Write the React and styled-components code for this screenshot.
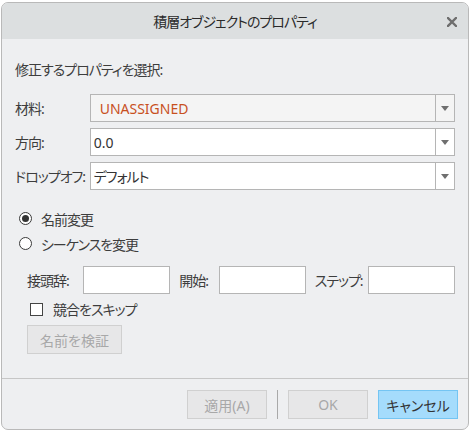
import React from 'react'
import styled, { createGlobalStyle } from 'styled-components'

const GlobalStyle = createGlobalStyle`
  body {
    margin: 0;
    background: #ffffff;
    font-family: "Noto Sans", "Noto Sans CJK JP", sans-serif;
    font-feature-settings: "palt";
  }
`

const Dialog = styled.div`
  margin: 2px 0 0 1px;
  width: 468px;
  height: 428px;
  box-sizing: border-box;
  border: 1px solid #b9b9b9;
  border-radius: 7px;
  overflow: hidden;
  background: #eeeff1;
  display: flex;
  flex-direction: column;
  color: #3d3d3d;
  font-size: 14px;
  letter-spacing: -1px;
`

const TitleBar = styled.div`
  height: 36px;
  flex-shrink: 0;
  background: #dcdfe0;
  display: flex;
  align-items: center;
  justify-content: center;
  position: relative;
`

const Title = styled.div`
  font-size: 14px;
  color: #2a2a2a;
`

const CloseButton = styled.div`
  position: absolute;
  right: 11px;
  top: 14px;
  width: 10px;
  height: 10px;
  display: flex;
`

const Body = styled.div`
  flex: 1;
  padding: 22px 13px 0;
  display: flex;
  flex-direction: column;
`

const Heading = styled.div`
  line-height: 18px;
`

const FieldList = styled.div`
  margin-top: 15px;
  display: flex;
  flex-direction: column;
  gap: 6px;
`

const FieldRow = styled.div`
  display: flex;
  align-items: center;
  height: 28px;
`

const FieldLabel = styled.div`
  width: 75px;
  white-space: nowrap;
`

const Combo = styled.div`
  width: 367px;
  height: 28px;
  box-sizing: border-box;
  border: 1px solid #b5b5b5;
  background: ${(p) => (p.$shaded ? '#f4f4f4' : '#ffffff')};
  display: flex;
`

const ComboValue = styled.div`
  flex: 1;
  padding-left: ${(p) => (p.$shaded ? 9 : 3)}px;
  display: flex;
  align-items: center;
  letter-spacing: ${(p) => (p.$latin ? '0' : '-1px')};
  color: ${(p) => p.$color || '#333333'};
`

const ComboArrow = styled.div`
  width: 18px;
  border-left: 1px solid #b5b5b5;
  display: flex;
  align-items: center;
  justify-content: center;

  &::after {
    content: '';
    border-left: 4px solid transparent;
    border-right: 4px solid transparent;
    border-top: 5px solid #6f6f6f;
  }
`

const RadioGroup = styled.div`
  margin-top: 16px;
  display: flex;
  flex-direction: column;
`

const RadioRow = styled.label`
  height: 25px;
  display: flex;
  align-items: center;
  padding-left: 4px;
`

const RadioDot = styled.span`
  width: 13px;
  height: 13px;
  box-sizing: border-box;
  border-radius: 50%;
  border: 1px solid #3a3a3a;
  background: #ffffff;
  margin-right: 9px;
  display: flex;
  align-items: center;
  justify-content: center;

  &::after {
    content: '';
    width: 7px;
    height: 7px;
    border-radius: 50%;
    background: ${(p) => (p.$checked ? '#333333' : 'transparent')};
  }
`

const SequenceRow = styled.div`
  margin-top: 10px;
  padding-left: 12px;
  display: flex;
  align-items: center;
  height: 28px;
`

const SeqLabel = styled.div`
  width: ${(p) => p.$width}px;
  margin-left: ${(p) => (p.$first ? 0 : 9)}px;
  white-space: nowrap;
`

const TextBox = styled.div`
  width: ${(p) => p.$width}px;
  height: 28px;
  box-sizing: border-box;
  border: 1px solid #b5b5b5;
  background: #ffffff;
`

const CheckRow = styled.label`
  margin-top: 6px;
  height: 18px;
  padding-left: 15px;
  display: flex;
  align-items: center;
`

const CheckBox = styled.span`
  width: 13px;
  height: 13px;
  box-sizing: border-box;
  border: 1px solid #444444;
  background: #ffffff;
  margin-right: 10px;
`

const Button = styled.div`
  width: ${(p) => p.$width || 80}px;
  height: 29px;
  box-sizing: border-box;
  display: flex;
  align-items: center;
  justify-content: center;
  letter-spacing: 0;
  border: 1px solid ${(p) => (p.$primary ? '#74c5f3' : '#d0d0d0')};
  background: ${(p) => (p.$primary ? '#a5dcfc' : '#e7e7e8')};
  color: ${(p) => (p.$primary ? '#333333' : '#a8a8a8')};
`

const VerifyButton = styled(Button)`
  margin: 7px 0 0 12px;
`

const Footer = styled.div`
  height: 51px;
  flex-shrink: 0;
  border-top: 1px solid #c6c6c6;
  padding: 11px 10px 0 0;
  box-sizing: border-box;
  display: flex;
  justify-content: flex-end;
  gap: 10px;
`

const FooterDivider = styled.div`
  width: 1px;
  height: 29px;
  background: #a9a9a9;
`

const CloseIcon = () => (
  <svg width="10" height="10" viewBox="0 0 10 10">
    <path d="M1 1L9 9M9 1L1 9" stroke="#6e6e6e" strokeWidth="2.4" strokeLinecap="square" />
  </svg>
)

const fields = [
  { label: '材料:', value: 'UNASSIGNED', color: '#c8501e', shaded: true, latin: true },
  { label: '方向:', value: '0.0', latin: true },
  { label: 'ドロップオフ:', value: 'デフォルト' },
]

export default function App() {
  return (
    <>
      <GlobalStyle />
      <Dialog>
        <TitleBar>
          <Title>積層オブジェクトのプロパティ</Title>
          <CloseButton><CloseIcon /></CloseButton>
        </TitleBar>
        <Body>
          <Heading>修正するプロパティを選択:</Heading>
          <FieldList>
            {fields.map((f) => (
              <FieldRow key={f.label}>
                <FieldLabel>{f.label}</FieldLabel>
                <Combo $shaded={f.shaded}>
                  <ComboValue $shaded={f.shaded} $latin={f.latin} $color={f.color}>{f.value}</ComboValue>
                  <ComboArrow />
                </Combo>
              </FieldRow>
            ))}
          </FieldList>
          <RadioGroup>
            <RadioRow><RadioDot $checked />名前変更</RadioRow>
            <RadioRow><RadioDot />シーケンスを変更</RadioRow>
          </RadioGroup>
          <SequenceRow>
            <SeqLabel $first $width={56}>接頭辞:</SeqLabel>
            <TextBox $width={88} />
            <SeqLabel $width={40}>開始:</SeqLabel>
            <TextBox $width={87} />
            <SeqLabel $width={54}>ステップ:</SeqLabel>
            <TextBox $width={87} />
          </SequenceRow>
          <CheckRow><CheckBox />競合をスキップ</CheckRow>
          <VerifyButton $width={95}>名前を検証</VerifyButton>
        </Body>
        <Footer>
          <Button>適用(A)</Button>
          <FooterDivider />
          <Button>OK</Button>
          <Button $primary>キャンセル</Button>
        </Footer>
      </Dialog>
    </>
  )
}
